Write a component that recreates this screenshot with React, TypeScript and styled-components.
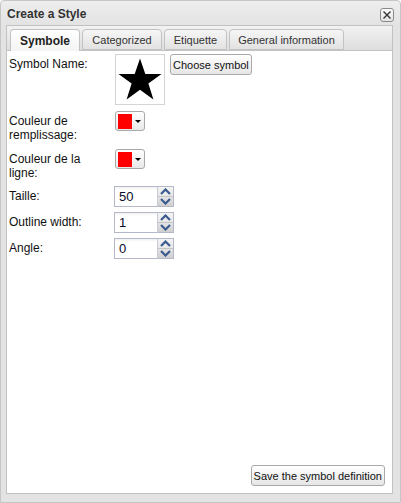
import React from "react";
import styled, { createGlobalStyle } from "styled-components";

const Global = createGlobalStyle`
  html, body { margin: 0; padding: 0; background: #ffffff; }
  * { box-sizing: border-box; }
`;

const Window = styled.div`
  width: 401px;
  height: 503px;
  display: flex;
  flex-direction: column;
  background: #e3e3e3;
  border: 1px solid #c6c6c6;
  border-radius: 4px 4px 0 0;
  font-family: "Liberation Sans", Arial, sans-serif;
`;

const Header = styled.div`
  height: 24px;
  flex: none;
  display: flex;
  align-items: center;
  justify-content: space-between;
  padding: 0 6px 0 6px;
  background: linear-gradient(#eeeeee, #e3e3e3);
  border-radius: 4px 4px 0 0;
`;

const Title = styled.span`
  font-weight: bold;
  font-size: 12px;
  color: #333333;
  margin-top: 1px;
`;

const CloseTool = styled.button`
  width: 14px;
  height: 14px;
  padding: 0;
  margin-top: 3px;
  border: 1px solid #8a8a8a;
  border-radius: 3px;
  background: linear-gradient(#fafafa, #e4e4e4);
  display: flex;
  align-items: center;
  justify-content: center;
`;

const TabPanel = styled.div`
  flex: 1;
  display: flex;
  flex-direction: column;
  margin: 0 7px 8px 5px;
  border: 1px solid #c2c2c2;
`;

const TabStrip = styled.div`
  height: 25px;
  flex: none;
  display: flex;
  align-items: flex-end;
  gap: 2px;
  padding-left: 3px;
  background: linear-gradient(#f2f2f2, #dedede);
  border-bottom: 1px solid #c4c4c4;
`;

const Tab = styled.div<{ $active?: boolean; $w: number }>`
  width: ${(p) => p.$w}px;
  height: ${(p) => (p.$active ? 22 : 21)}px;
  margin-bottom: ${(p) => (p.$active ? -1 : 0)}px;
  display: flex;
  align-items: center;
  justify-content: center;
  border: 1px solid #c2c2c2;
  border-bottom: ${(p) => (p.$active ? "none" : "1px solid #c2c2c2")};
  border-radius: 4px 4px 0 0;
  background: ${(p) =>
    p.$active ? "linear-gradient(#ffffff, #f4f4f4)" : "linear-gradient(#f6f6f6, #e2e2e2)"};
  font-size: ${(p) => (p.$active ? 12 : 11)}px;
  font-weight: ${(p) => (p.$active ? "bold" : "normal")};
  color: ${(p) => (p.$active ? "#222222" : "#333333")};
  padding-top: ${(p) => (p.$active ? 1 : 0)}px;
`;

const Body = styled.div`
  flex: 1;
  display: flex;
  flex-direction: column;
  background: #ffffff;
  padding: 3px 7px 7px 2px;
`;

const Form = styled.div`
  display: flex;
  flex-direction: column;
  flex: 1;
`;

const Row = styled.div<{ $mb: number }>`
  display: flex;
  align-items: flex-start;
  margin-bottom: ${(p) => p.$mb}px;
`;

const Label = styled.div`
  width: 105px;
  flex: none;
  padding: 3px 18px 0 0;
  font-size: 12px;
  line-height: 14px;
  color: #111111;
`;

const SymbolBox = styled.div`
  width: 50px;
  height: 51px;
  margin-left: 1px;
  border: 1px solid #d4d4d4;
  display: flex;
  align-items: center;
  justify-content: center;
`;

const Button = styled.button`
  height: 21px;
  padding: 0 2px;
  border: 1px solid #a9a9a9;
  border-radius: 3px;
  background: linear-gradient(#ffffff, #e6e6e6);
  font-family: "Liberation Sans", Arial, sans-serif;
  font-size: 11px;
  color: #111111;
  white-space: nowrap;
`;

const ChooseButton = styled(Button)`
  margin-left: 5px;
`;

const ColorButton = styled.div`
  width: 30px;
  height: 20px;
  margin-left: 1px;
  border: 1px solid #a9a9a9;
  border-radius: 3px;
  background: linear-gradient(#ffffff, #e8e8e8);
  display: flex;
  align-items: center;
  padding-left: 2px;
  gap: 3px;
`;

const Swatch = styled.div<{ $color: string }>`
  width: 14px;
  height: 15px;
  background: ${(p) => p.$color};
`;

const Arrow = styled.div`
  width: 0;
  height: 0;
  border-left: 3px solid transparent;
  border-right: 3px solid transparent;
  border-top: 3px solid #000000;
  margin-top: 1px;
`;

const Spinner = styled.div`
  display: flex;
  height: 21px;
`;

const SpinInput = styled.div`
  width: 43px;
  height: 21px;
  border: 1px solid #b5b8c8;
  border-right: none;
  background: linear-gradient(#f1f1f1 0, #ffffff 3px);
  font-size: 13px;
  line-height: 20px;
  padding-left: 4px;
  color: #0a0a28;
`;

const SpinTrigger = styled.div`
  width: 17px;
  height: 21px;
  border: 1px solid #b5b8c8;
  border-left: 1px solid #c9ccd6;
  background: linear-gradient(#f4f4f4, #d9d9d9);
  display: flex;
  flex-direction: column;
`;

const SpinHalf = styled.div<{ $bottom?: boolean }>`
  flex: 1;
  display: flex;
  align-items: center;
  justify-content: center;
  border-top: ${(p) => (p.$bottom ? "1px solid #c4c4c4" : "none")};
  background: ${(p) => (p.$bottom ? "linear-gradient(#e4e4e4, #cfcfcf)" : "transparent")};
`;

const Footer = styled.div`
  display: flex;
  justify-content: flex-end;
`;

const SaveButton = styled(Button)``;

const Chevron = ({ up }: { up?: boolean }) => (
  <svg width="11" height="7" viewBox="0 0 11 7">
    <path
      d={up ? "M1 6 L5.5 1.5 L10 6" : "M1 1 L5.5 5.5 L10 1"}
      fill="none"
      stroke="#3b5b8e"
      strokeWidth="2.2"
    />
  </svg>
);

const SpinField = ({ value }: { value: string }) => (
  <Spinner>
    <SpinInput>{value}</SpinInput>
    <SpinTrigger>
      <SpinHalf>
        <Chevron up />
      </SpinHalf>
      <SpinHalf $bottom>
        <Chevron />
      </SpinHalf>
    </SpinTrigger>
  </Spinner>
);

const Star = () => (
  <svg width="46" height="46" viewBox="0 0 46 46">
    <polygon
      points="23,1.5 28.3,17 44.5,17 31.4,26.6 36.4,42.5 23,32.8 9.6,42.5 14.6,26.6 1.5,17 17.7,17"
      fill="#000000"
    />
  </svg>
);

export default function App() {
  return (
    <>
      <Global />
      <Window>
        <Header>
          <Title>Create a Style</Title>
          <CloseTool aria-label="close">
            <svg width="10" height="10" viewBox="0 0 10 10">
              <path d="M1.5 1.5 L8.5 8.5 M8.5 1.5 L1.5 8.5" stroke="#333" strokeWidth="1.4" />
            </svg>
          </CloseTool>
        </Header>
        <TabPanel>
          <TabStrip>
            <Tab $active $w={70}>Symbole</Tab>
            <Tab $w={80}>Categorized</Tab>
            <Tab $w={63}>Etiquette</Tab>
            <Tab $w={115}>General information</Tab>
          </TabStrip>
          <Body>
            <Form>
              <Row $mb={6}>
                <Label>Symbol Name:</Label>
                <SymbolBox>
                  <Star />
                </SymbolBox>
                <ChooseButton>Choose symbol</ChooseButton>
              </Row>
              <Row $mb={7}>
                <Label>Couleur de remplissage:</Label>
                <ColorButton>
                  <Swatch $color="#ff0000" />
                  <Arrow />
                </ColorButton>
              </Row>
              <Row $mb={6}>
                <Label>Couleur de la ligne:</Label>
                <ColorButton>
                  <Swatch $color="#ff0000" />
                  <Arrow />
                </ColorButton>
              </Row>
              <Row $mb={5}>
                <Label>Taille:</Label>
                <SpinField value="50" />
              </Row>
              <Row $mb={5}>
                <Label>Outline width:</Label>
                <SpinField value="1" />
              </Row>
              <Row $mb={5}>
                <Label>Angle:</Label>
                <SpinField value="0" />
              </Row>
            </Form>
            <Footer>
              <SaveButton>Save the symbol definition</SaveButton>
            </Footer>
          </Body>
        </TabPanel>
      </Window>
    </>
  );
}
